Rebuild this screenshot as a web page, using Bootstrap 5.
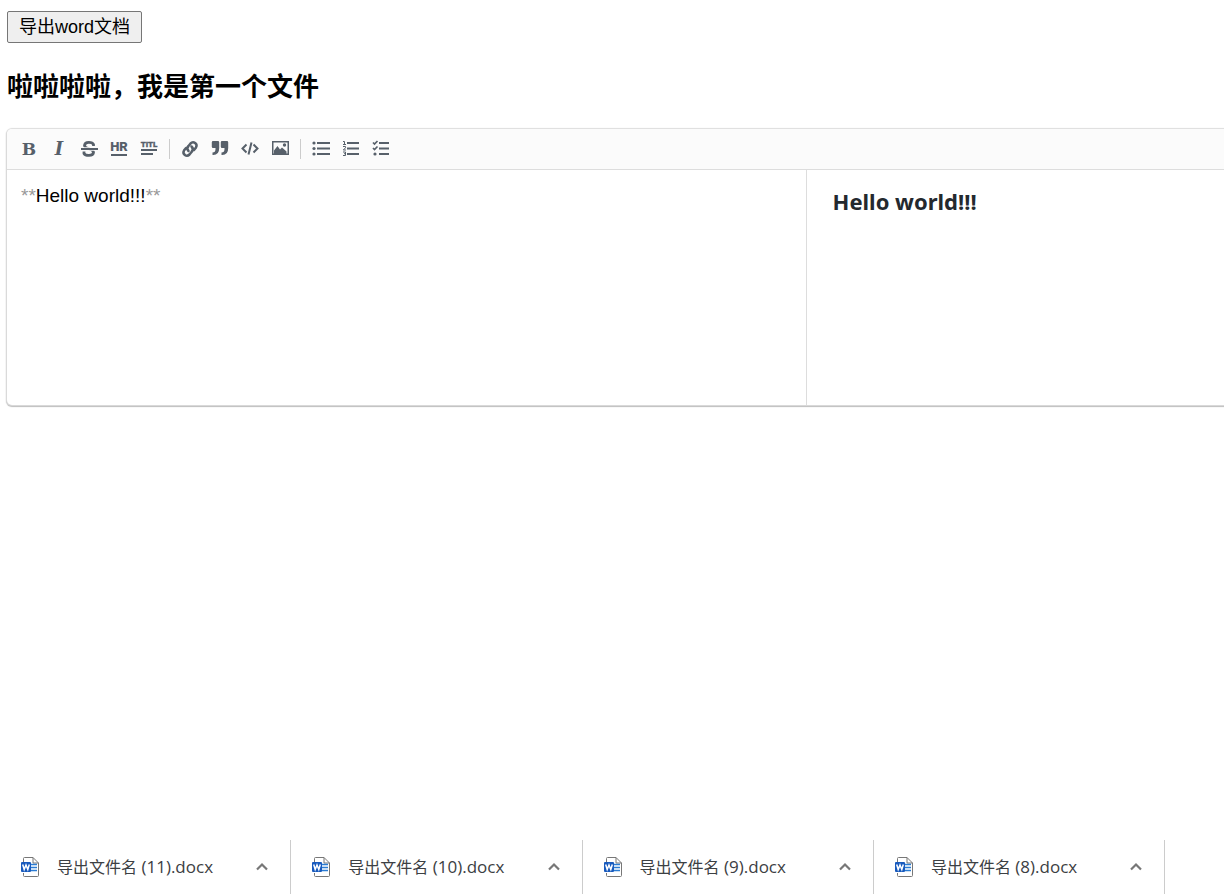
<!DOCTYPE html>
<html lang="zh-CN">
<head>
<meta charset="utf-8">
<meta name="viewport" content="width=device-width, initial-scale=1">
<title>导出word文档</title>
<link href="https://cdn.jsdelivr.net/npm/bootstrap@5.3.0/dist/css/bootstrap.min.css" rel="stylesheet">
<style>
  body { font-family: "Liberation Sans", "Noto Sans CJK SC", sans-serif; color: #000; background: #fff; }
  .page { padding: 11px 0 0 7px; }
  .export-btn { height: 32px; padding: 0 11px; border: 1px solid #767676; border-radius: 2px; background: #efefef; color: #000; font-size: 18px; line-height: 30px; }
  .doc-title { font-size: 26px; line-height: 36px; font-weight: 700; margin: 26px 0 24px; }
  .editor { border-radius: 5px 0 0 5px; box-shadow: 0 0 1px 1px #ddd, 0 1px 1px 1px #bbb; overflow: hidden; background: #fff; }
  .editor-tools { height: 41px; padding: 0 7px; background: #fbfbfb; border-bottom: 1px solid #ddd; }
  .tool { width: 30px; height: 30px; padding: 0; border: 0; background: none; color: #57606a; display: flex; align-items: center; justify-content: center; }
  .tool svg { width: 20px; height: 20px; display: block; }
  .tool-sep { width: 1px; height: 20px; margin: 0 5px; background: #ccc; }
  .panes { height: 235px; }
  .source { flex: 0 0 65.7%; border-right: 1px solid #ddd; padding: 12px 14px; font-size: 19px; line-height: 28px; outline: 0; }
  .mark-sign { color: #999; }
  .preview { padding: 15px 26px; font-family: "Noto Sans", sans-serif; font-size: 22px; line-height: 32px; color: #24292e; }
  .downloads { height: 56px; padding-bottom: 2px; }
  .download { flex: 0 0 23.8%; min-width: 0; padding-left: 19px; padding-right: 18px; border-right: 1px solid #ccc; }
  .download a { color: #3c4043; font-family: "Open Sans", "Noto Sans CJK SC", sans-serif; font-size: 16px; line-height: 24px; gap: 17px; }
  .download .suffix { font-size: 17px; line-height: 22px; }
  .download svg { width: 21px; height: 21px; flex: none; }
  .download button { padding: 0; border: 0; background: none; color: #777; }
</style>
<script src="https://cdn.jsdelivr.net/npm/bootstrap@5.3.0/dist/js/bootstrap.bundle.min.js"></script>
</head>
<body class="min-vh-100 d-flex flex-column overflow-x-hidden">
<svg class="d-none">
  <symbol id="word" viewBox="0 0 21 21">
    <path d="M4.500 5V1.500q0-1 1-1H14L19.500 6v12.500q0 1-1 1h-13q-1 0-1-1V16" fill="#fff" stroke="#777"/>
    <path d="M14 .5V6h5.500" fill="none" stroke="#777"/>
    <path d="M12 7.500h6M12 10.500h6M12 13.500h6" stroke="#2b7cd3" stroke-width="1.400"/>
    <rect x="2" y="5" width="10" height="10" rx="1" fill="#185abd"/>
    <path d="M3.700 7.500l1.500 5L7 8l1.800 4.500 1.500-5" fill="none" stroke="#fff" stroke-width="1.500"/>
  </symbol>
  <symbol id="up" viewBox="0 0 21 21"><path d="M6 12.500l5-5 5 5" fill="none" stroke="currentColor" stroke-width="2.200"/></symbol>
</svg>

<main class="page flex-grow-1">
  <button type="button" class="export-btn">导出word文档</button>
  <h2 class="doc-title">啦啦啦啦，我是第一个文件</h2>

  <section class="editor">
    <div class="editor-tools d-flex align-items-center" role="toolbar" aria-label="编辑工具">
      <button type="button" class="tool" aria-label="粗体"><svg viewBox="0 0 20 20"><text x="10" y="16" text-anchor="middle" font-family="DejaVu Serif" font-weight="700" font-size="17" fill="currentColor">B</text></svg></button>
      <button type="button" class="tool" aria-label="斜体"><svg viewBox="0 0 20 20"><text x="10" y="16" text-anchor="middle" font-family="DejaVu Serif" font-style="italic" font-weight="700" font-size="18" fill="currentColor">I</text></svg></button>
      <button type="button" class="tool" aria-label="删除线"><svg viewBox="0 0 20 20" fill="none" stroke="currentColor"><path d="M14.500 7V5.500C13.500 3 6 2 5.500 6.500c0 2 3 2.800 5 3.500s4 1.500 4 3.500c-.5 4-8 3.500-9.500 1V12.500" stroke-width="2.800"/><path d="M2 10h17" stroke="#fbfbfb" stroke-width="3.600"/><path d="M2 10h17" stroke-width="1.800"/></svg></button>
      <button type="button" class="tool" aria-label="分割线"><svg viewBox="0 0 20 20"><text x="10" y="12" text-anchor="middle" font-family="Roboto, sans-serif" font-weight="900" font-size="13" fill="currentColor">HR</text><path d="M2 15h16v2H2z" fill="currentColor"/></svg></button>
      <button type="button" class="tool" aria-label="标题"><svg viewBox="0 0 20 20"><text x="10" y="8" text-anchor="middle" font-family="Roboto, sans-serif" font-weight="900" font-size="8" fill="currentColor" stroke="currentColor" stroke-width=".3">TITL</text><path d="M2 10h16v2H2zM2 14h12v2H2z" fill="currentColor"/></svg></button>
      <span class="tool-sep"></span>
      <button type="button" class="tool" aria-label="链接"><svg viewBox="0 0 20 20" fill="none" stroke="currentColor" stroke-width="2.500" stroke-linecap="round"><path d="M8.500 12C6.500 10 7 8.500 8.500 7l2-2.500c3-3 7.500.5 5.500 4L14 11M11.500 7.500c2 2 1.500 4 0 5.500l-2 2.500c-3 3-7.500-.5-5.500-4L6 9"/></svg></button>
      <button type="button" class="tool" aria-label="引用"><svg viewBox="0 0 20 20" fill="currentColor"><path d="M3 2h5q1.200 0 1.200 1.200V9q0 7-6 7H2.500v-2.500q3 0 3-3.500V9H3Q1.800 9 1.800 7.800V3.200Q1.800 2 3 2zM12 2h5q1.200 0 1.200 1.200V9q0 7-6 7h-.7v-2.500q3 0 3-3.500V9H12q-1.200 0-1.200-1.200V3.200Q10.800 2 12 2z"/></svg></button>
      <button type="button" class="tool" aria-label="代码"><svg viewBox="0 0 20 20" fill="none" stroke="currentColor" stroke-width="2"><path d="M6.500 5.500L2.500 9.500l4 4M13.500 5.500l4 4-4 4M11.500 3.500l-3 12"/></svg></button>
      <button type="button" class="tool" aria-label="图片"><svg viewBox="0 0 20 20" fill="currentColor"><path fill-rule="evenodd" d="M2 2h17v14H2zM3.500 3.500v11h14v-11z"/><path d="M4 15v-3.500L7.500 7l2.500 3.500L12 8.500l4.500 4V15z"/><circle cx="14.500" cy="6" r="1.700"/></svg></button>
      <span class="tool-sep"></span>
      <button type="button" class="tool" aria-label="无序列表"><svg viewBox="0 0 20 20" fill="currentColor"><path d="M6 3h13v2H6zM6 8.500h13v2H6zM6 14h13v2H6z"/><circle cx="3" cy="4" r="1.600"/><circle cx="3" cy="9.500" r="1.600"/><circle cx="3" cy="15" r="1.600"/></svg></button>
      <button type="button" class="tool" aria-label="有序列表"><svg viewBox="0 0 20 20" fill="currentColor"><path d="M6 3h12v2H6zM6 8.500h12v2H6zM6 14h12v2H6z"/><path d="M2 2.500h1.500v3M2 5.500h3M2 7.500h2.500v1.300L2.300 11H5M2 13h2.500v3.500H2M3 14.700h1.500" fill="none" stroke="currentColor" stroke-width="1"/></svg></button>
      <button type="button" class="tool" aria-label="任务列表"><svg viewBox="0 0 20 20" fill="currentColor"><path d="M8 3h10v2H8zM8 8.500h10v2H8zM8 14h10v2H8z"/><path d="M2 3.500L3.500 5 6.500 2M2 9L3.500 10.500l3-3" fill="none" stroke="currentColor" stroke-width="1.700"/><circle cx="4" cy="15" r="1.600"/></svg></button>
    </div>
    <div class="panes d-flex">
      <div class="source" contenteditable="true" role="textbox" aria-multiline="true" aria-label="Markdown" spellcheck="false"><span class="mark-sign">**</span>Hello world!!!<span class="mark-sign">**</span></div>
      <div class="preview"><strong>Hello world!!!</strong></div>
    </div>
  </section>
</main>

<footer class="downloads d-flex">
  <div class="download d-flex align-items-center justify-content-between"><a href="#" class="d-flex align-items-center text-decoration-none text-nowrap"><svg><use href="#word"/></svg><span>导出文件名<span class="suffix"> (11).docx</span></span></a><button type="button" aria-label="更多"><svg class="d-block"><use href="#up"/></svg></button></div>
  <div class="download d-flex align-items-center justify-content-between"><a href="#" class="d-flex align-items-center text-decoration-none text-nowrap"><svg><use href="#word"/></svg><span>导出文件名<span class="suffix"> (10).docx</span></span></a><button type="button" aria-label="更多"><svg class="d-block"><use href="#up"/></svg></button></div>
  <div class="download d-flex align-items-center justify-content-between"><a href="#" class="d-flex align-items-center text-decoration-none text-nowrap"><svg><use href="#word"/></svg><span>导出文件名<span class="suffix"> (9).docx</span></span></a><button type="button" aria-label="更多"><svg class="d-block"><use href="#up"/></svg></button></div>
  <div class="download d-flex align-items-center justify-content-between"><a href="#" class="d-flex align-items-center text-decoration-none text-nowrap"><svg><use href="#word"/></svg><span>导出文件名<span class="suffix"> (8).docx</span></span></a><button type="button" aria-label="更多"><svg class="d-block"><use href="#up"/></svg></button></div>
</footer>
</body>
</html>
